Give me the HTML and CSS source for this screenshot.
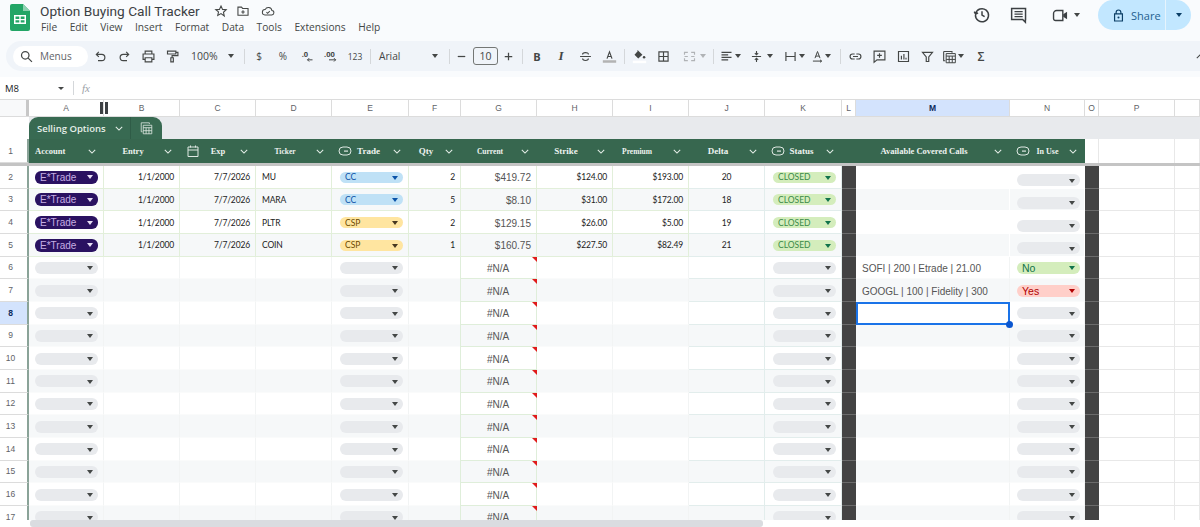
FILE: index.html
```html
<!DOCTYPE html>
<html lang="en">
<head>
<meta charset="utf-8">
<title>Option Buying Call Tracker</title>
<link rel="stylesheet" href="styles.css">
</head>
<body>
<svg class="defs" aria-hidden="true">
  <symbol id="chev" viewBox="0 0 10 6"><path d="M1 1l4 4 4-4" fill="none" stroke="currentColor" stroke-width="1.3"/></symbol>
  <symbol id="chip" viewBox="0 0 14 10"><rect x="1" y="1" width="12" height="8" rx="4" fill="none" stroke="currentColor" stroke-width="1"/><rect x="6" y="4.5" width="4" height="1.2" fill="currentColor"/></symbol>
</svg>

<header class="top">
  <svg class="logo" viewBox="0 0 20 27"><path d="M2 0h11l7 7v18a2 2 0 0 1-2 2H2a2 2 0 0 1-2-2V2a2 2 0 0 1 2-2z" fill="#23a566"/><path d="M13 0l7 7h-7z" fill="#8ed1b1"/><path d="M4 11h12v9H4z" fill="#fff"/><path d="M5.500 12.500h3.800v2.400H5.500zM10.700 12.500h3.800v2.400h-3.800zM5.500 16.200h3.800v2.400H5.500zM10.700 16.200h3.800v2.400h-3.800z" fill="#23a566"/></svg>
  <div class="titles">
    <div class="title-row">
      <span class="doc-title">Option Buying Call Tracker</span>
      <svg class="ti" viewBox="0 0 18 18"><path d="M9 2.500l2 4.400 4.700.5-3.500 3.200 1 4.700L9 12.400l-4.200 2.400 1-4.700L2.300 7.400 7 6.900z" fill="none" stroke="#444746" stroke-width="1.400"/></svg>
      <svg class="ti" viewBox="0 0 18 18"><path d="M2.500 4h4.500l1.500 1.700h7v8.800h-13zM9 8v4.500M6.800 10.200h4.400" fill="none" stroke="#444746" stroke-width="1.400"/></svg>
      <svg class="ti" viewBox="0 0 18 18"><path d="M5 14h8.500a2.800 2.800 0 0 0 .5-5.600A4.600 4.600 0 0 0 5.300 7.200 3.400 3.400 0 0 0 5 14zM7 10.500l1.500 1.500 2.800-2.800" fill="none" stroke="#444746" stroke-width="1.300"/></svg>
    </div>
    <nav class="menus"><span>File</span><span>Edit</span><span>View</span><span>Insert</span><span>Format</span><span>Data</span><span>Tools</span><span>Extensions</span><span>Help</span></nav>
  </div>
  <div class="top-actions">
    <svg class="act history" viewBox="0 0 22 22"><path d="M3.200 9.500A8 8 0 1 1 3 11M1.500 7l1.700 3 3-1.500M11 6.500V11l3.200 2" fill="none" stroke="#3c4043" stroke-width="1.800"/></svg>
    <svg class="act comment" viewBox="0 0 22 22"><path d="M2 3h17v13.500h-.2v3.300L15.500 16.500H2z" fill="none" stroke="#3c4043" stroke-width="1.800"/><path d="M5.500 7h10M5.500 10h10M5.500 13h10" stroke="#3c4043" stroke-width="1.500"/></svg>
    <div class="meet">
      <svg class="video" viewBox="0 0 22 18"><path d="M6 2.500h8v13H4.500A2.500 2.500 0 0 1 2 13V6.500A4 4 0 0 1 6 2.500z" fill="none" stroke="#3c4043" stroke-width="1.800"/><path d="M14.500 7.500L19.500 4v10l-5-3.500z" fill="#3c4043"/></svg>
      <i class="caret"></i>
    </div>
    <div class="share">
      <div class="share-main"><svg class="lock" viewBox="0 0 14 16"><path d="M2 6h10v9H2zM4 6V4a3 3 0 0 1 6 0v2" fill="none" stroke="#0b3f66" stroke-width="1.500"/><circle cx="7" cy="10.500" r="1.300" fill="#0b3f66"/></svg><span>Share</span></div>
      <div class="share-more"><i class="caret dark"></i></div>
    </div>
  </div>
</header>

<div class="toolbar">
  <div class="search"><svg class="ic" viewBox="0 0 18 18"><circle cx="7.500" cy="7.500" r="4.500" fill="none" stroke="#444746" stroke-width="1.500"/><path d="M11 11l4.500 4.500" stroke="#444746" stroke-width="1.500"/></svg><span>Menus</span></div>
  <div class="b b24"><svg class="ic" viewBox="0 0 18 18"><path d="M7 3.500L4 6.500 7 9.500M4 6.500h6.500a3.700 3.700 0 0 1 0 7.500H6" fill="none" stroke="#444746" stroke-width="1.400"/></svg></div>
  <div class="b b24"><svg class="ic" viewBox="0 0 18 18"><path d="M11 3.500l3 3-3 3M14 6.500H7.500a3.700 3.700 0 0 0 0 7.500H12" fill="none" stroke="#444746" stroke-width="1.400"/></svg></div>
  <div class="b b24"><svg class="ic" viewBox="0 0 18 18"><path d="M5 6V2.500h8V6M5 12.500H2.500V6h13v6.500H13M5 10.500h8v5H5z" fill="none" stroke="#444746" stroke-width="1.400"/></svg></div>
  <div class="b b24"><svg class="ic" viewBox="0 0 18 18"><path d="M3 2.500h10v3.500H3zM13 4h2.500v4H8.500v2.500M7 10.500h3v5H7z" fill="none" stroke="#444746" stroke-width="1.400"/></svg></div>
  <div class="b zoom"><span>100%</span><i class="caret"></i></div>
  <i class="sep"></i>
  <div class="b b24 txt">$</div>
  <div class="b b24 txt">%</div>
  <div class="b b24"><svg class="ic" viewBox="0 0 18 18"><text x="2" y="10" class="dec">.0</text><path d="M15 13H9M11 11l-2 2 2 2" fill="none" stroke="#444746" stroke-width="1.200"/></svg></div>
  <div class="b b24"><svg class="ic" viewBox="0 0 18 18"><text x="0" y="10" class="dec">.00</text><path d="M6 13h8M12 11l2 2-2 2" fill="none" stroke="#444746" stroke-width="1.200"/></svg></div>
  <div class="b b24 txt small">123</div>
  <i class="sep"></i>
  <div class="b font"><span>Arial</span><i class="caret"></i></div>
  <i class="sep"></i>
  <div class="b minus"><svg class="ic" viewBox="0 0 18 18"><path d="M4.500 9h9" stroke="#444746" stroke-width="1.500"/></svg></div>
  <div class="size">10</div>
  <div class="b plus"><svg class="ic" viewBox="0 0 18 18"><path d="M9 4.500v9M4.500 9h9" stroke="#444746" stroke-width="1.500"/></svg></div>
  <i class="sep"></i>
  <div class="b b24 fb">B</div>
  <div class="b b24 fi">I</div>
  <div class="b b24"><svg class="ic" viewBox="0 0 18 18"><path d="M2.500 9h13M5.500 6.500C5.500 4 12.500 3.500 12.500 6.500M12.500 11.500C12.500 14.500 5.500 14.500 5.500 11.500" fill="none" stroke="#444746" stroke-width="1.400"/></svg></div>
  <div class="b b24"><svg class="ic" viewBox="0 0 18 18"><path d="M6 11.500L9 3.500l3 8M7 9h4" fill="none" stroke="#444746" stroke-width="1.400"/><rect x="1" y="13.500" width="16" height="3" fill="#b3b3b3"/></svg></div>
  <i class="sep"></i>
  <div class="b b24"><svg class="ic" viewBox="0 0 18 18"><path d="M6 1.500l1 1L3 7l4.500 4.500L12.500 7 7 1.500" fill="#444746"/><circle cx="14.500" cy="10" r="1.500" fill="#444746"/><rect x="1" y="14" width="16" height="3" fill="#fff"/></svg></div>
  <div class="b b24"><svg class="ic" viewBox="0 0 18 18"><path d="M3.500 3.500h11v11h-11zM9 3.500v11M3.500 9h11" fill="none" stroke="#444746" stroke-width="1.400"/></svg></div>
  <div class="b merge"><svg class="ic" viewBox="0 0 18 18"><path d="M7 4H3v3M7 14H3v-3M11 4h4v3M11 14h4v-3M3 9h4M11 9h4" fill="none" stroke="#b0b3b6" stroke-width="1.400"/></svg><i class="caret light"></i></div>
  <i class="sep"></i>
  <div class="b w30"><svg class="ic" viewBox="0 0 18 18"><path d="M3 4h12M3 7h8M3 10h12M3 13h8" stroke="#444746" stroke-width="1.300"/></svg><i class="caret"></i></div>
  <div class="b w34"><svg class="ic" viewBox="0 0 18 18"><path d="M3.500 9h11M9 2.500v4M7 5l2 2 2-2M9 15.500v-4M7 13l2-2 2 2" fill="none" stroke="#444746" stroke-width="1.300"/></svg><i class="caret"></i></div>
  <div class="b w30"><svg class="ic" viewBox="0 0 18 18"><path d="M3.500 3.500v11M14.500 3.500v11M3.500 9h11" fill="none" stroke="#444746" stroke-width="1.400"/></svg><i class="caret"></i></div>
  <div class="b w27"><svg class="ic" viewBox="0 0 18 18"><path d="M6 11L9 3l3 8M7 8.500h4M3.500 14.500H14l-2-1.500M14 14.500L12 16" fill="none" stroke="#444746" stroke-width="1.200"/></svg><i class="caret"></i></div>
  <i class="sep"></i>
  <div class="b b24"><svg class="ic" viewBox="0 0 18 18"><path d="M8 6H5.500a3 3 0 0 0 0 6H8M10 6h2.500a3 3 0 0 1 0 6H10M6 9h6" fill="none" stroke="#444746" stroke-width="1.400"/></svg></div>
  <div class="b b24"><svg class="ic" viewBox="0 0 18 18"><path d="M2.500 2.500h13v10.500H6l-3.500 3zM9 5v5.500M6.200 7.700h5.600" fill="none" stroke="#444746" stroke-width="1.400"/></svg></div>
  <div class="b b24"><svg class="ic" viewBox="0 0 18 18"><path d="M3 3h12v12H3zM6.500 8v4.500M9.500 6v6.500M12 10.500v2" fill="none" stroke="#444746" stroke-width="1.400"/></svg></div>
  <div class="b b24"><svg class="ic" viewBox="0 0 18 18"><path d="M3 4h12l-4.500 5.500V15h-3V9.500z" fill="none" stroke="#444746" stroke-width="1.400"/></svg></div>
  <div class="b w30"><svg class="ic" viewBox="0 0 18 18"><path d="M2 3h10v1.500M2 3v11h2" fill="none" stroke="#444746" stroke-width="1.300"/><path d="M5 5.500h11v11H5zM5 8.500h11M8.600 8.500v8M12.300 8.500v8M5 12.500h11" fill="none" stroke="#444746" stroke-width="1.200"/></svg><i class="caret"></i></div>
  <div class="b b24 sigma">Σ</div>
  <svg class="collapse" viewBox="0 0 10 6"><path d="M1 5l4-4 4 4" fill="none" stroke="#444746" stroke-width="1.300"/></svg>
</div>

<div class="formula">
  <span class="cellref">M8</span><i class="caret"></i><i class="sep tall"></i><span class="fx">fx</span>
</div>

<main class="sheet">
  <div class="handle"><i></i><i></i></div>
  <div class="selection"><i></i></div>

  <div class="grid colhead">
    <div class="corner"></div><div>A</div><div>B</div><div>C</div><div>D</div><div>E</div><div>F</div><div>G</div><div>H</div><div>I</div><div>J</div><div>K</div><div>L</div><div class="on">M</div><div>N</div><div>O</div><div>P</div><div></div>
  </div>

  <div class="tabrow">
    <div class="tabgap"></div>
    <div class="tab">
      <div class="tab-name"><span>Selling Options</span><svg class="chev" viewBox="0 0 10 6"><use href="#chev"/></svg></div>
      <div class="tab-icon"><svg viewBox="0 0 16 16"><path d="M1.500 1h10v1.500M1.500 1v11h1.500" fill="none" stroke="#dfe9e3" stroke-width="1"/><path d="M4 4h10.500v10.500H4zM4 7h10.500M7.500 7v7.500M11 7v7.500M4 10.700h10.500" fill="none" stroke="#dfe9e3" stroke-width="1"/></svg></div>
    </div>
  </div>

  <div class="grid hdr">
    <div class="rh">1</div>
    <div class="h left"><span class="s85">Account</span><svg class="chev" viewBox="0 0 10 6"><use href="#chev"/></svg></div>
    <div class="h"><span class="s85">Entry</span><svg class="chev" viewBox="0 0 10 6"><use href="#chev"/></svg></div>
    <div class="h icn"><svg class="hic" viewBox="0 0 14 14"><path d="M2 3h10v9.500H2zM2 6h10M4.500 1.500v2M9.500 1.500v2" fill="none" stroke="#dfe9e3" stroke-width="1"/></svg><span class="s85 nudge-r">Exp</span><svg class="chev" viewBox="0 0 10 6"><use href="#chev"/></svg></div>
    <div class="h"><span class="s75">Ticker</span><svg class="chev" viewBox="0 0 10 6"><use href="#chev"/></svg></div>
    <div class="h icn"><svg class="hic" viewBox="0 0 14 10"><use href="#chip"/></svg><span class="s9">Trade</span><svg class="chev" viewBox="0 0 10 6"><use href="#chev"/></svg></div>
    <div class="h"><span class="s9">Qty</span><svg class="chev" viewBox="0 0 10 6"><use href="#chev"/></svg></div>
    <div class="h"><span class="s75">Current</span><svg class="chev" viewBox="0 0 10 6"><use href="#chev"/></svg></div>
    <div class="h"><span class="s9">Strike</span><svg class="chev" viewBox="0 0 10 6"><use href="#chev"/></svg></div>
    <div class="h"><span class="s75 nudge-l">Premium</span><svg class="chev" viewBox="0 0 10 6"><use href="#chev"/></svg></div>
    <div class="h"><span class="s9">Delta</span><svg class="chev" viewBox="0 0 10 6"><use href="#chev"/></svg></div>
    <div class="h icn"><svg class="hic" viewBox="0 0 14 10"><use href="#chip"/></svg><span class="s9">Status</span><svg class="chev" viewBox="0 0 10 6"><use href="#chev"/></svg></div>
    <div class="h spacer"></div>
    <div class="h"><span class="s85">Available Covered Calls</span><svg class="chev" viewBox="0 0 10 6"><use href="#chev"/></svg></div>
    <div class="h icn"><svg class="hic" viewBox="0 0 14 10"><use href="#chip"/></svg><span class="s8 nudge-r">In Use</span><svg class="chev" viewBox="0 0 10 6"><use href="#chev"/></svg></div>
    <div class="blank"></div><div class="blank"></div><div class="blank"></div>
  </div>
  <div class="freeze"></div>

  <div class="grid r done"><div class="rh">2</div><div class="c"><span class="p acct">E*Trade</span></div><div class="c d">1/1/2000</div><div class="c d">7/7/2026</div><div class="c t">MU</div><div class="c"><span class="p cc">CC</span></div><div class="c d">2</div><div class="c a">$419.72</div><div class="c d">$124.00</div><div class="c d">$193.00</div><div class="c m">20</div><div class="c"><span class="p closed">CLOSED</span></div><div class="c dark"></div><div class="c"></div><div class="c"><span class="p e low"></span></div><div class="c dark"></div><div class="c x"></div><div class="c x"></div></div>
  <div class="grid r done alt"><div class="rh">3</div><div class="c"><span class="p acct">E*Trade</span></div><div class="c d">1/1/2000</div><div class="c d">7/7/2026</div><div class="c t">MARA</div><div class="c"><span class="p cc">CC</span></div><div class="c d">5</div><div class="c a">$8.10</div><div class="c d">$31.00</div><div class="c d">$172.00</div><div class="c m">18</div><div class="c"><span class="p closed">CLOSED</span></div><div class="c dark"></div><div class="c"></div><div class="c"><span class="p e low"></span></div><div class="c dark"></div><div class="c x"></div><div class="c x"></div></div>
  <div class="grid r done"><div class="rh">4</div><div class="c"><span class="p acct">E*Trade</span></div><div class="c d">1/1/2000</div><div class="c d">7/7/2026</div><div class="c t">PLTR</div><div class="c"><span class="p csp">CSP</span></div><div class="c d">2</div><div class="c a">$129.15</div><div class="c d">$26.00</div><div class="c d">$5.00</div><div class="c m">19</div><div class="c"><span class="p closed">CLOSED</span></div><div class="c dark"></div><div class="c"></div><div class="c"><span class="p e low"></span></div><div class="c dark"></div><div class="c x"></div><div class="c x"></div></div>
  <div class="grid r done alt"><div class="rh">5</div><div class="c"><span class="p acct">E*Trade</span></div><div class="c d">1/1/2000</div><div class="c d">7/7/2026</div><div class="c t">COIN</div><div class="c"><span class="p csp">CSP</span></div><div class="c d">1</div><div class="c a">$160.75</div><div class="c d">$227.50</div><div class="c d">$82.49</div><div class="c m">21</div><div class="c"><span class="p closed">CLOSED</span></div><div class="c dark"></div><div class="c"></div><div class="c"><span class="p e low"></span></div><div class="c dark"></div><div class="c x"></div><div class="c x"></div></div>
  <div class="grid r"><div class="rh">6</div><div class="c"><span class="p e"></span></div><div class="c"></div><div class="c"></div><div class="c"></div><div class="c"><span class="p e"></span></div><div class="c"></div><div class="c na">#N/A</div><div class="c"></div><div class="c"></div><div class="c"></div><div class="c"><span class="p e"></span></div><div class="c dark"></div><div class="c l">SOFI | 200 | Etrade | 21.00</div><div class="c"><span class="p no">No</span></div><div class="c dark"></div><div class="c x"></div><div class="c x"></div></div>
  <div class="grid r alt"><div class="rh">7</div><div class="c"><span class="p e"></span></div><div class="c"></div><div class="c"></div><div class="c"></div><div class="c"><span class="p e"></span></div><div class="c"></div><div class="c na">#N/A</div><div class="c"></div><div class="c"></div><div class="c"></div><div class="c"><span class="p e"></span></div><div class="c dark"></div><div class="c l">GOOGL | 100 | Fidelity | 300</div><div class="c"><span class="p yes">Yes</span></div><div class="c dark"></div><div class="c x"></div><div class="c x"></div></div>
  <div class="grid r"><div class="rh on">8</div><div class="c"><span class="p e"></span></div><div class="c"></div><div class="c"></div><div class="c"></div><div class="c"><span class="p e"></span></div><div class="c"></div><div class="c na">#N/A</div><div class="c"></div><div class="c"></div><div class="c"></div><div class="c"><span class="p e"></span></div><div class="c dark"></div><div class="c"></div><div class="c"><span class="p e"></span></div><div class="c dark"></div><div class="c x"></div><div class="c x"></div></div>
  <div class="grid r alt"><div class="rh">9</div><div class="c"><span class="p e"></span></div><div class="c"></div><div class="c"></div><div class="c"></div><div class="c"><span class="p e"></span></div><div class="c"></div><div class="c na">#N/A</div><div class="c"></div><div class="c"></div><div class="c"></div><div class="c"><span class="p e"></span></div><div class="c dark"></div><div class="c"></div><div class="c"><span class="p e"></span></div><div class="c dark"></div><div class="c x"></div><div class="c x"></div></div>
  <div class="grid r"><div class="rh">10</div><div class="c"><span class="p e"></span></div><div class="c"></div><div class="c"></div><div class="c"></div><div class="c"><span class="p e"></span></div><div class="c"></div><div class="c na">#N/A</div><div class="c"></div><div class="c"></div><div class="c"></div><div class="c"><span class="p e"></span></div><div class="c dark"></div><div class="c"></div><div class="c"><span class="p e"></span></div><div class="c dark"></div><div class="c x"></div><div class="c x"></div></div>
  <div class="grid r alt"><div class="rh">11</div><div class="c"><span class="p e"></span></div><div class="c"></div><div class="c"></div><div class="c"></div><div class="c"><span class="p e"></span></div><div class="c"></div><div class="c na">#N/A</div><div class="c"></div><div class="c"></div><div class="c"></div><div class="c"><span class="p e"></span></div><div class="c dark"></div><div class="c"></div><div class="c"><span class="p e"></span></div><div class="c dark"></div><div class="c x"></div><div class="c x"></div></div>
  <div class="grid r"><div class="rh">12</div><div class="c"><span class="p e"></span></div><div class="c"></div><div class="c"></div><div class="c"></div><div class="c"><span class="p e"></span></div><div class="c"></div><div class="c na">#N/A</div><div class="c"></div><div class="c"></div><div class="c"></div><div class="c"><span class="p e"></span></div><div class="c dark"></div><div class="c"></div><div class="c"><span class="p e"></span></div><div class="c dark"></div><div class="c x"></div><div class="c x"></div></div>
  <div class="grid r alt"><div class="rh">13</div><div class="c"><span class="p e"></span></div><div class="c"></div><div class="c"></div><div class="c"></div><div class="c"><span class="p e"></span></div><div class="c"></div><div class="c na">#N/A</div><div class="c"></div><div class="c"></div><div class="c"></div><div class="c"><span class="p e"></span></div><div class="c dark"></div><div class="c"></div><div class="c"><span class="p e"></span></div><div class="c dark"></div><div class="c x"></div><div class="c x"></div></div>
  <div class="grid r"><div class="rh">14</div><div class="c"><span class="p e"></span></div><div class="c"></div><div class="c"></div><div class="c"></div><div class="c"><span class="p e"></span></div><div class="c"></div><div class="c na">#N/A</div><div class="c"></div><div class="c"></div><div class="c"></div><div class="c"><span class="p e"></span></div><div class="c dark"></div><div class="c"></div><div class="c"><span class="p e"></span></div><div class="c dark"></div><div class="c x"></div><div class="c x"></div></div>
  <div class="grid r alt"><div class="rh">15</div><div class="c"><span class="p e"></span></div><div class="c"></div><div class="c"></div><div class="c"></div><div class="c"><span class="p e"></span></div><div class="c"></div><div class="c na">#N/A</div><div class="c"></div><div class="c"></div><div class="c"></div><div class="c"><span class="p e"></span></div><div class="c dark"></div><div class="c"></div><div class="c"><span class="p e"></span></div><div class="c dark"></div><div class="c x"></div><div class="c x"></div></div>
  <div class="grid r"><div class="rh">16</div><div class="c"><span class="p e"></span></div><div class="c"></div><div class="c"></div><div class="c"></div><div class="c"><span class="p e"></span></div><div class="c"></div><div class="c na">#N/A</div><div class="c"></div><div class="c"></div><div class="c"></div><div class="c"><span class="p e"></span></div><div class="c dark"></div><div class="c"></div><div class="c"><span class="p e"></span></div><div class="c dark"></div><div class="c x"></div><div class="c x"></div></div>
  <div class="grid r alt"><div class="rh">17</div><div class="c"><span class="p e"></span></div><div class="c"></div><div class="c"></div><div class="c"></div><div class="c"><span class="p e"></span></div><div class="c"></div><div class="c na">#N/A</div><div class="c"></div><div class="c"></div><div class="c"></div><div class="c"><span class="p e"></span></div><div class="c dark"></div><div class="c"></div><div class="c"><span class="p e"></span></div><div class="c dark"></div><div class="c x"></div><div class="c x"></div></div>
</main>

<div class="scroll"><div class="thumb"></div></div>
</body>
</html>
```
FILE: styles.css
```css
* { box-sizing: border-box; }
html, body { margin: 0; padding: 0; }
body {
  width: 1200px; height: 527px; overflow: hidden; background: #f9fbfd;
  font-family: "Open Sans", "Liberation Sans", sans-serif; color: #3c4043;
  display: flex; flex-direction: column;
}
.defs { width: 0; height: 0; position: absolute; }
i { display: block; font-style: normal; }
.caret { width: 0; height: 0; border-left: 3.5px solid transparent; border-right: 3.5px solid transparent; border-top: 4px solid #444746; flex: none; }
.caret.light { border-top-color: #b0b3b6; }
.caret.dark { border-top-color: #0b3f66; }

/* Title area */
.top { height: 41px; flex: none; display: flex; padding-left: 10px; position: relative; }
.logo { width: 20px; height: 27px; margin-top: 4px; flex: none; }
.titles { margin-left: 10px; display: flex; flex-direction: column; }
.title-row { display: flex; align-items: center; height: 19px; margin-top: 1px; }
.doc-title { font-family: "Roboto", sans-serif; font-size: 13.700px; color: #3c4043; width: 174px; white-space: nowrap; }
.ti { width: 14px; height: 14px; margin-right: 8px; flex: none; }
.ti + .ti + .ti { margin-left: 3px; }
.menus { display: flex; font-size: 10.200px; height: 14px; line-height: 14px; gap: 12.500px; color: #444746; padding-left: 1px; }
.top-actions { margin-left: auto; display: flex; align-items: flex-start; padding-right: 9px; }
.act { width: 18px; height: 18px; margin-top: 6px; flex: none; }
.history { margin-right: 19px; }
.comment { margin-right: 24px; }
.meet { display: flex; align-items: center; height: 30px; width: 46px; gap: 5px; }
.video { width: 17px; height: 15px; flex: none; }
.share { width: 93px; height: 30px; background: #c2e7ff; border-radius: 15px; display: flex; }
.share-main { width: 68px; display: flex; align-items: center; padding-left: 15px; gap: 7px; font-size: 11px; color: #1f5f8f; border-right: 1px solid #e6f4fd; }
.lock { width: 11px; height: 13px; flex: none; }
.share-more { flex: 1; display: flex; align-items: center; justify-content: center; }

/* Toolbar */
.toolbar { height: 30px; flex: none; background: #f0f4f9; border-radius: 15px 0 0 15px; margin-left: 6px; padding-left: 7px; display: flex; align-items: center; color: #444746; }
.search { width: 75px; height: 21px; background: #fff; border-radius: 11px; display: flex; align-items: center; padding-left: 6px; gap: 6px; font-size: 10px; color: #5f6368; flex: none; }
.ic { width: 15px; height: 15px; flex: none; overflow: visible; }
.b { height: 24px; display: flex; align-items: center; justify-content: center; flex: none; gap: 5px; }
.b24 { width: 24px; }
.txt { font-size: 10px; font-weight: 500; }
.txt.small { font-size: 8.500px; font-weight: 400; }
.dec { font-family: "Open Sans", sans-serif; font-size: 9px; font-weight: 700; fill: #444746; }
.zoom { width: 57px; justify-content: flex-start; padding-left: 7px; font-size: 10.500px; gap: 10px; }
.sep { width: 1px; height: 15px; background: #d4d7da; margin: 0 2px 0 3px; flex: none; }
.font { width: 73px; justify-content: space-between; padding: 0 8px 0 6px; font-size: 10.200px; }
.minus { width: 18px; }
.size { width: 25px; height: 18px; margin-left: 3px; border: 1px solid #747775; border-radius: 3px; font-size: 10.500px; text-align: center; line-height: 16px; flex: none; }
.plus { width: 21px; }
.fb { font-weight: 700; font-size: 11px; }
.fi { font-style: italic; font-family: "Liberation Serif", serif; font-weight: 700; font-size: 13px; }
.merge { width: 35px; gap: 3px; padding-left: 3px; }
.w30 { width: 30px; gap: 1px; justify-content: flex-start; padding-left: 3px; }
.w34 { width: 34px; gap: 3px; justify-content: flex-start; padding-left: 3px; }
.w27 { width: 27px; gap: 0; justify-content: flex-start; padding-left: 0; }
.sigma { font-size: 12px; font-weight: 600; }
.collapse { width: 8px; height: 5px; margin-left: auto; margin-right: -4px; flex: none; }

/* Formula bar */
.formula { height: 22px; margin-top: 6px; flex: none; background: #fff; display: flex; align-items: center; padding-left: 5px; font-size: 9.500px; color: #202124; }
.cellref { width: 53px; }
.formula .caret { border-left-width: 3px; border-right-width: 3px; border-top-width: 3px; }
.sep.tall { margin: 0 0 0 9px; height: 14px; }
.fx { font-family: "Liberation Serif", serif; font-style: italic; font-size: 11px; color: #9aa0a6; margin-left: 8px; }

/* Sheet */
.sheet { height: 421px; flex: none; overflow: hidden; background: #fff; position: relative; }
.grid { display: grid; grid-template-columns: 29px 75px 76px 76px 76px 77px 52px 76px 76px 76px 76px 77px 14px 154px 75px 14px 76px 25px; }

.colhead { height: 18px; background: #fff; border-top: 1px solid #dcdcdc; border-bottom: 1px solid #dcdcdc; font-family: "Liberation Sans", sans-serif; font-size: 8.500px; color: #5f6368; }
.colhead > div { display: flex; align-items: center; justify-content: center; border-right: 1px solid #dcdcdc; }
.colhead .corner { background: #f8f9fa; border-right: 3px solid #c7c7c7; }
.colhead .on { background: #d3e3fd; color: #0b2a5b; font-weight: 700; }

.tabrow { height: 22px; display: flex; background: #e8eaed; }
.tabgap { width: 29px; background: #fff; flex: none; }
.tab { width: 133px; height: 22px; background: #386a52; border-radius: 9px 9px 0 0; display: flex; color: #e6efe9; flex: none; }
.tab-name { width: 102px; display: flex; align-items: center; justify-content: space-between; padding: 0 7px 0 8px; font-size: 9.500px; font-weight: 600; border-right: 1px solid #2f5c47; }
.tab-icon { flex: 1; display: flex; align-items: center; justify-content: center; }
.tab-icon svg { width: 13px; height: 13px; }
.chev { width: 8px; height: 5px; flex: none; color: #e6efe9; }

.hdr { height: 24px; background: #fff; }
.rh { display: flex; align-items: center; justify-content: center; padding-right: 6px; font-family: "Liberation Sans", sans-serif; font-size: 8.500px; color: #5f6368; background: #fff; border-right: 2px solid #8aa398; border-bottom: 1px solid #dcdcdc; }
.rh.on { background: #d3e3fd; color: #0b2a5b; font-weight: 700; }
.h { background: #37674f; color: #eef3f0; display: flex; align-items: center; padding-left: 6px; font-family: "Liberation Serif", serif; font-weight: 700; }
.h > span { flex: 1; text-align: center; white-space: nowrap; }
.h > .chev { margin: 0 8px; }
.h.left > span { text-align: left; }
.hic { width: 14px; height: 14px; flex: none; color: #dfe9e3; }
.s9 { font-size: 9px; }
.s85 { font-size: 8.500px; }
.s8 { font-size: 8px; }
.s75 { font-size: 7.500px; }
.nudge-r { padding-left: 4px; }
.nudge-l { padding-right: 10px; }
.blank { border-right: 1px solid #e8e8e8; }
.freeze { height: 3px; background: #c4c4c4; }

.r { height: 22.670px; background: #fff; }
.r.alt { background: #f6f8f9; }
.c { border-right: 1px solid #f2f4f4; border-bottom: 1px solid #fafbfb; display: flex; align-items: center; padding-top: 1px; white-space: nowrap; overflow: visible; min-width: 0; position: relative; font-family: "Lato", "Open Sans", sans-serif; font-size: 8.500px; letter-spacing: -.15px; color: #222; }
.c.d { justify-content: flex-end; padding-right: 5px; }
.c.m { justify-content: center; }
.c.t { padding-left: 6px; }
.c.a { justify-content: flex-end; padding-right: 5px; padding-top: 2px; font-family: "Liberation Sans", sans-serif; font-size: 10px; letter-spacing: 0; color: #555; }
.c.l { padding-left: 6px; padding-top: 2px; font-family: "Liberation Sans", sans-serif; font-size: 10px; letter-spacing: 0; color: #555; }
.c.na { justify-content: center; font-family: "Liberation Sans", sans-serif; font-size: 10px; letter-spacing: 0; color: #555; border-right: 1px solid #dfeeda; border-left: 1px solid #dfeeda; border-bottom: 1px solid #dfeeda; padding-top: 2px; padding-right: 1px; margin-left: -1px; }
.c.na::after { content: ""; position: absolute; top: 0; right: -1px; border-top: 5px solid #e01b1b; border-left: 5px solid transparent; }
.r > .c:nth-child(11), .r > .c:nth-child(12) { border-right-color: #e2edec; border-bottom-color: #e2edec; }
.done > .c { border-right-color: #e2efda; border-bottom-color: #e2efda; }
.done > .c:nth-child(15), .done > .c:nth-child(14) { border-right-color: #fff; border-bottom-color: #fff; }
.c.dark { background: #434343; border-right: 0; border-bottom: 1px solid #6b6b6b; }
.c.x { background: #fff; border-right: 1px solid #e8e8e8; border-bottom: 1px solid #e8e8e8; }

.p { height: 12px; border-radius: 6px; margin-left: 6px; width: 63px; flex: none; display: flex; align-items: center; padding-left: 5px; position: relative; font-size: 9px; letter-spacing: 0; }
.c:nth-child(6) > .p, .c:nth-child(12) > .p { margin-left: 8px; }
.c:nth-child(15) > .p { margin-left: 7px; }
.p::after { content: ""; position: absolute; right: 5px; top: 4.500px; border-left: 3.500px solid transparent; border-right: 3.500px solid transparent; border-top: 4px solid #444746; }
.e { background: #e8eaed; }
.low { top: 3px; }
.acct { background: #2a1261; color: #c6aee3; font-family: "Liberation Sans", sans-serif; font-size: 10px; height: 13px; }
.acct::after { border-top-color: #e8e0f5; }
.cc, .csp, .closed { height: 11px; font-family: "Lato", sans-serif; font-size: 8.500px; }
.cc { background: #bfe1f6; color: #0a53a8; }
.cc::after { border-top-color: #0a53a8; top: 4px; }
.csp { background: #ffe5a0; color: #6b4a00; }
.csp::after { border-top-color: #473821; top: 4px; }
.closed { background: #d4edbc; color: #3a8a48; }
.closed::after { border-top-color: #11734b; top: 4px; }
.no { background: #d4edbc; color: #11734b; font-family: "Liberation Sans", sans-serif; font-size: 10.500px; }
.no::after { border-top-color: #11734b; }
.yes { background: #ffcfc9; color: #b10202; font-family: "Liberation Sans", sans-serif; font-size: 10.500px; }
.yes::after { border-top-color: #b10202; }

/* Overlays */
.handle { position: absolute; left: 100px; top: 3px; display: flex; gap: 2px; z-index: 3; }
.handle i { width: 3px; height: 12px; background: #3c4043; }
.selection { position: absolute; left: 856px; top: 203px; width: 154px; height: 23px; border: 2px solid #1a73e8; z-index: 3; }
.selection i { position: absolute; right: -5px; bottom: -5px; width: 7px; height: 7px; border-radius: 50%; background: #0b57d0; }

.scroll { height: 7px; flex: none; background: #fff; padding-left: 30px; }
.thumb { width: 733px; height: 7px; background: #dadce0; border-radius: 3px; }
```
